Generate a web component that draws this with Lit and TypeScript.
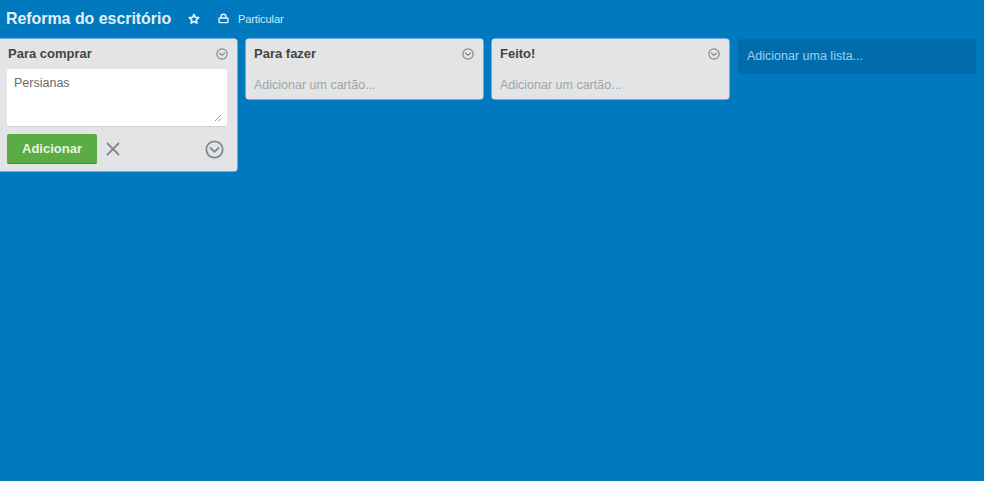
import { LitElement, html, css, svg } from "lit";
import { customElement } from "lit/decorators.js";

const chevron = (size: number, sw: number) => html`<svg width=${size} height=${size} viewBox="0 0 20 20" fill="none" stroke="#85888b" stroke-width=${sw}>
  <circle cx="10" cy="10" r="8.6"></circle>
  ${svg`<path d="M5.8 8.4 L10 12.4 L14.2 8.4" stroke-linecap="round" stroke-linejoin="round"></path>`}
</svg>`;

@customElement("app-root")
export class AppRoot extends LitElement {
  static styles = css`
    :host {
      display: block;
      width: 984px;
      height: 481px;
      background: #0079bf;
      overflow: hidden;
      font-family: "Liberation Sans", Arial, sans-serif;
      color: #444;
    }
    .top {
      height: 39px;
      display: flex;
      align-items: center;
      padding-left: 6px;
      box-sizing: border-box;
      color: #e4f0f8;
    }
    .title {
      font-size: 15.9px;
      font-weight: 700;
      width: 182px;
      white-space: nowrap;
      position: relative;
      top: -1px;
    }
    .star { width: 12px; height: 12px; display: block; margin-right: 18px; position: relative; top: -1px; }
    .lock { width: 11px; height: 11px; display: block; margin-right: 8px; position: relative; top: -1px; }
    .priv { font-size: 11px; letter-spacing: -0.1px; margin-left: 1px; position: relative; top: -1px; color: #d6e8f4; }
    .board {
      display: flex;
      align-items: flex-start;
      gap: 9px;
    }
    .list {
      width: 237px;
      box-sizing: border-box;
      background: #e2e4e6;
      border-radius: 0 3px 3px 0;
      padding: 0 8px;
      box-shadow: 0 0 0 0.5px #cfe6f5;
    }
    .list.round { border-radius: 3px; height: 60px; }
    .list.first { height: 132px; padding-left: 7px; padding-right: 9px; }
    .head {
      height: 29px;
      padding-bottom: 1px;
      box-sizing: content-box;
      display: flex;
      align-items: center;
      justify-content: space-between;
      font-size: 13px;
      font-weight: 700;
      color: #444;
    }
    .first .head { padding-left: 1px; }
    .head svg { display: block; margin-right: 1px; }
    .first .head svg { margin-right: 0; }
    .add {
      margin-top: 9px;
      font-size: 12.5px;
      color: #a3a5a8;
      white-space: nowrap;
    }
    .field { position: relative; width: 220px; height: 58px; }
    textarea {
      display: block;
      box-sizing: border-box;
      width: 220px;
      height: 58px;
      resize: none;
      border: none;
      outline: none;
      border-bottom: 1px solid #cfd1d3;
      border-radius: 2px;
      background: #fff;
      padding: 7px 7px;
      margin: 0;
      font: 12.5px "Liberation Sans", Arial, sans-serif;
      color: #6b6b6b;
    }
    .grip { position: absolute; right: 5px; bottom: 5px; width: 8px; height: 8px; display: block; }
    .actions {
      display: flex;
      align-items: center;
      margin-top: 7px;
    }
    .btn {
      width: 90px;
      height: 30px;
      box-sizing: border-box;
      border: none;
      border-bottom: 1px solid #3f8a38;
      border-radius: 2px;
      background: #5aac44;
      color: #e8f5e2;
      font: 700 13px "Liberation Sans", Arial, sans-serif;
      padding: 0;
    }
    .x { display: block; width: 16px; height: 16px; margin-left: 8px; }
    .more { display: block; line-height: 0; margin-left: auto; margin-right: 4px; }
    .addlist {
      width: 238px;
      height: 35px;
      box-sizing: border-box;
      background: #006cab;
      border-radius: 3px;
      padding: 10px 9px 0;
      font-size: 12.5px;
      color: #9ed0ee;
      white-space: nowrap;
    }
  `;

  private head(name: string) {
    return html`<div class="head"><span>${name}</span>${chevron(12, 2)}</div>`;
  }

  render() {
    return html`
      <div class="top">
        <span class="title">Reforma do escritório</span>
        <svg class="star" viewBox="0 0 14 14" fill="none" stroke="#eaf4fb" stroke-width="1.9" stroke-linejoin="round">
          <path d="M7 1.6 L8.6 5 L12.4 5.4 L9.6 8 L10.4 11.8 L7 9.9 L3.6 11.8 L4.4 8 L1.6 5.4 L5.4 5 Z"></path>
        </svg>
        <svg class="lock" viewBox="0 0 12 12" fill="none" stroke="#eaf4fb" stroke-width="1.5">
          <rect x="1.2" y="5.5" width="9.6" height="5" rx="0.8"></rect>
          <path d="M3.3 5.5 V4 A2.7 2.7 0 0 1 8.7 4 V5.5"></path>
        </svg>
        <span class="priv">Particular</span>
      </div>
      <div class="board">
        <section class="list first">
          ${this.head("Para comprar")}
          <div class="field">
            <textarea .value=${"Persianas"}></textarea>
            <svg class="grip" viewBox="0 0 8 8" fill="none" stroke="#9a9a9a" stroke-width="1">
              <path d="M1 7 L7 1 M4.5 7 L7 4.5"></path>
            </svg>
          </div>
          <div class="actions">
            <button class="btn">Adicionar</button>
            <svg class="x" viewBox="0 0 16 16" fill="none" stroke="#85888b" stroke-width="1.8">
              <path d="M2 2 L14 14 M14 2 L2 14"></path>
            </svg>
            <span class="more">${chevron(19, 1.9)}</span>
          </div>
        </section>
        <section class="list round">
          ${this.head("Para fazer")}
          <div class="add">Adicionar um cartão...</div>
        </section>
        <section class="list round">
          ${this.head("Feito!")}
          <div class="add">Adicionar um cartão...</div>
        </section>
        <div class="addlist">Adicionar uma lista...</div>
      </div>
    `;
  }
}
